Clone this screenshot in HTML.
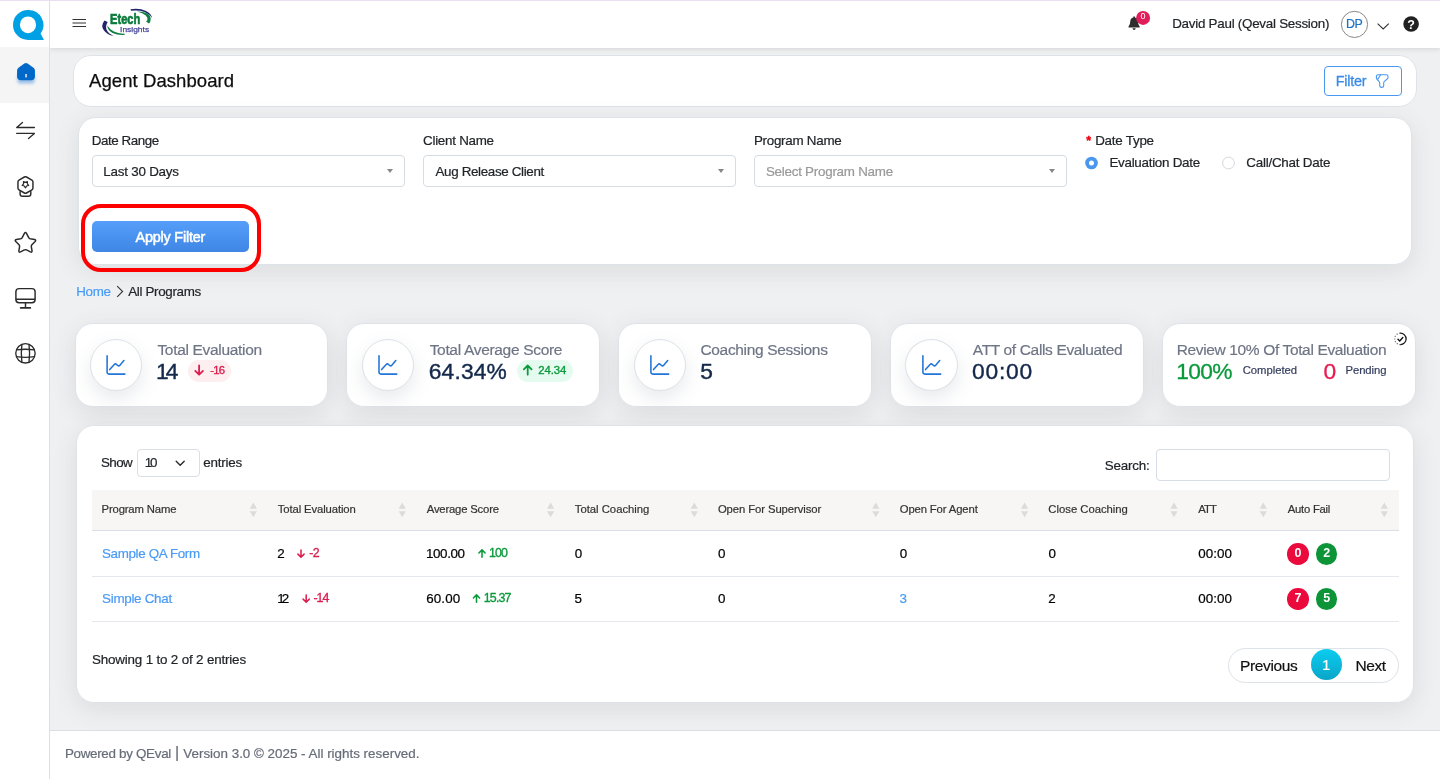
<!DOCTYPE html>
<html lang="en">
<head>
<meta charset="utf-8">
<title>Agent Dashboard</title>
<style>
*{box-sizing:border-box;margin:0;padding:0}
html,body{width:1440px;height:779px;overflow:hidden}
body{font-family:"Liberation Sans",sans-serif;background:#eff0f2;color:#212529;position:relative;font-size:13px}
#wrap{position:absolute;left:0;top:0;width:1440px;height:779px;will-change:transform}
.abs{position:absolute}
svg{position:absolute;overflow:visible}
.t{position:absolute;white-space:pre;line-height:1;z-index:20;-webkit-text-stroke:0.2px currentColor}
#topline{left:0;top:0;width:1440px;height:1px;background:#eadff0;z-index:60}
#side{left:0;top:0;width:50px;height:779px;background:#fff;border-right:1px solid #dcdfe3;z-index:6}
#side .active{left:0;top:47px;width:49px;height:56px;background:#f5f5f5}
#head{left:50px;top:0;width:1390px;height:48px;background:#fff;box-shadow:0 1px 5px rgba(40,50,60,.15);z-index:5}
.card{position:absolute;background:#fff;border-radius:18px;border:1px solid #dee3e8;box-shadow:0 6px 24px rgba(70,74,82,.115)}
#titlecard{left:73px;top:55px;width:1344px;height:52px;border:1px solid #dde3e8;box-shadow:none}
#filtercard{left:78px;top:117px;width:1334px;height:148px}
#tablecard{left:76px;top:425px;width:1338px;height:278px}
.stat{top:323px;width:254px;height:84px}
.ic{position:absolute;top:339px;width:52px;height:52px;border-radius:50%;background:#fff;border:1px solid #dde2e8;box-shadow:0 8px 18px rgba(120,130,150,.17);z-index:3}
.sel{position:absolute;top:155px;width:313px;height:32px;background:#fff;border:1px solid #d5dde3;border-radius:4px}
.sel i{position:absolute;right:11px;top:12.5px;width:0;height:0;border-left:3.2px solid transparent;border-right:3.2px solid transparent;border-top:4.6px solid #888}
.pill{position:absolute;border-radius:12px;height:22px;top:360px}
.hr{position:absolute;left:92px;width:1307px;height:1px;background:#e4e8ee}
.dot{position:absolute;width:21.4px;height:21.4px;border-radius:50%;color:#fff;font-size:12.5px;font-weight:700;text-align:center;line-height:21.4px;z-index:21}
#foot{left:50px;top:730px;width:1390px;height:49px;background:#fff;border-top:1px solid #dadfe4}
</style>
</head>
<body>
<div id="wrap">
<div class="abs" id="topline"></div>

<!-- sidebar -->
<div class="abs" id="side">
  <div class="abs active"></div>
  
<svg style="left:0;top:0" width="50" height="400" viewBox="0 0 50 400">
  <!-- Q logo -->
  <path fill="#00a1e4" fill-rule="evenodd" d="M28.1 9.9 A15.1 15 0 1 0 28.1 39.9 L44 39.9 L40.6 33.6 A15.1 15 0 0 0 28.1 9.9 Z M28 16.4 A8.1 8.4 0 1 1 28 33.2 A8.1 8.4 0 1 1 28 16.4 Z"/>
  <!-- home -->
  <defs><filter id="hs" x="-50%" y="-50%" width="200%" height="200%"><feGaussianBlur stdDeviation="1.6"/></filter></defs>
  <path d="M19.5 74 H32.5 Q34.5 74 34.5 76 V81.5 Q34.5 83.5 32.5 83.5 H19.5 Q17.5 83.5 17.5 81.5 V76 Q17.5 74 19.5 74Z" fill="#2f80d8" opacity=".45" filter="url(#hs)"/>
  <path fill="#0068c9" d="M24.3 63.5 Q25.95 62.3 27.6 63.5 L33.5 67.8 Q34.95 68.9 34.95 70.6 V76.2 Q34.95 80.3 30.8 80.3 H21.2 Q17.05 80.3 17.05 76.2 V70.6 Q17.05 68.9 18.5 67.8 Z"/>
  <rect x="25.1" y="74" width="1.9" height="3.4" fill="#b4d0f0"/>
  <!-- swap -->
  <g fill="none" stroke="#2b2b2b" stroke-width="1.3" stroke-linecap="round" stroke-linejoin="round">
    <path d="M34.4 127.5 H16.7 L22.5 122.4"/>
    <path d="M16.7 133.4 H34.4 L28.5 138.5"/>
  </g>
  <!-- award -->
  <g fill="none" stroke="#2b2b2b" stroke-width="1.45" stroke-linejoin="round" stroke-linecap="round">
    <path d="M24.4 177 Q25.45 176.4 26.5 177 L31.9 180.1 Q32.95 180.7 32.95 181.9 V188.1 Q32.95 189.3 31.9 189.9 L26.5 193 Q25.45 193.6 24.4 193 L19 189.9 Q17.95 189.3 17.95 188.1 V181.9 Q17.95 180.7 19 180.1 Z"/>
    <path d="M25.45 187.8 L24.27 186.02 L22.22 185.45 L23.55 183.78 L23.45 181.65 L25.45 182.4 L27.45 181.65 L27.35 183.78 L28.68 185.45 L26.63 186.02 Z" stroke-width="1.2"/>
    <path d="M20.1 191.4 V194 Q20.1 196.3 22.4 196.3 H28.5 Q30.8 196.3 30.8 194 V191.4"/>
  </g>
  <!-- star -->
  <path fill="none" stroke="#2b2b2b" stroke-width="1.5" stroke-linejoin="round" d="M24.4 233.4 Q25.45 231.7 26.5 233.4 L28.7 237.7 Q29.2 238.6 30.2 238.8 L34.6 239.5 Q36.4 240.1 35.1 241.5 L31.9 244.7 Q31.2 245.5 31.3 246.5 L32 250.7 Q32.2 252.7 30.4 251.9 L26.5 249.9 Q25.45 249.4 24.4 249.9 L20.5 251.9 Q18.7 252.7 18.9 250.7 L19.6 246.5 Q19.7 245.5 19 244.7 L15.8 241.5 Q14.5 240.1 16.3 239.5 L20.7 238.8 Q21.7 238.6 22.2 237.7 Z"/>
  <!-- monitor -->
  <g fill="none" stroke="#2b2b2b" stroke-width="1.45">
    <rect x="15.9" y="288.6" width="19.2" height="14.2" rx="3.2"/>
    <path d="M15.9 299.2 H35.1 M25.5 302.8 V307.5"/>
    <path d="M20.6 307.9 H30.4" stroke-width="1.6" stroke-linecap="round"/>
  </g>
  <!-- globe -->
  <g fill="none" stroke="#2b2b2b" stroke-width="1.35">
    <circle cx="25.45" cy="353.3" r="9.7"/>
    <path d="M21.9 344.3 Q20.7 353.3 21.9 362.3 M29 344.3 Q30.2 353.3 29 362.3"/>
    <path d="M16.4 349.9 Q25.45 348.5 34.5 349.9 M16.4 356.7 Q25.45 358.1 34.5 356.7"/>
  </g>
</svg>

</div>

<!-- header -->
<div class="abs" id="head">
  
<svg style="left:-50px;top:0" width="1440" height="48" viewBox="0 0 1440 48">
  <!-- hamburger -->
  <path d="M72.5 19.5 H86 M72.5 23 H86 M72.5 26.5 H86" stroke="#333" stroke-width="1.1" fill="none"/>
  <!-- logo -->
  <g>
    <path d="M104.5 20.4 Q100.5 25.5 103.8 30.3 Q107.2 34.9 113.6 35.9 Q108.2 33.6 106.6 29.8 Q105.2 26.1 107.7 22 Z" fill="#23236e"/>
    <path d="M107.3 25.5 Q107.6 30.5 112.6 33 Q117.6 35.4 124.6 34.9 L124.5 33.6 Q118.5 33.9 113.9 31.6 Q109.5 29.3 107.3 25.5 Z" fill="#0f7f42"/>
    <path d="M130.5 9.2 Q139.5 7.8 146 10.9 Q151.7 13.7 152 18 Q149.5 14 144.5 12 Q138.5 9.9 131 10.8 Z" fill="#23236e"/>
    <path d="M137 11.4 Q144.5 11.3 148.8 14.6 Q151.8 17.5 150 22.4 L148.8 23.5 L146 21.3 L147.3 20.5 Q148 17.5 145.8 15.5 Q142.8 12.9 137 11.4 Z" fill="#0f7f42"/>
    <text x="110.1" y="24.4" font-family="'Liberation Sans',sans-serif" font-weight="700" font-size="14" fill="#0b7a3b" stroke="#0b7a3b" stroke-width="0.65" stroke-linejoin="round" textLength="30.2" lengthAdjust="spacingAndGlyphs">Etech</text>
    <text x="120.1" y="31.8" font-family="'Liberation Sans',sans-serif" font-size="7.8" fill="#45459a" stroke="#45459a" stroke-width="0.25" textLength="29" lengthAdjust="spacingAndGlyphs">Insights</text>
  </g>
  <!-- bell -->
  <path fill="#2d2d2d" d="M1134.1 16.2 Q1134.9 16.2 1134.9 17 V17.5 Q1138 18.3 1138 21.8 Q1138 25 1139.5 26.2 Q1140 26.7 1139.6 27.4 H1128.6 Q1128.2 26.7 1128.7 26.2 Q1130.2 25 1130.2 21.8 Q1130.2 18.3 1133.3 17.5 V17 Q1133.3 16.2 1134.1 16.2 Z M1132.5 28.3 H1135.7 Q1135.6 29.9 1134.1 29.9 Q1132.6 29.9 1132.5 28.3 Z"/>
  <circle cx="1143.1" cy="17.9" r="7" fill="#e01e5a"/>
  <text x="1142.9" y="18.8" text-anchor="middle" font-family="'Liberation Sans',sans-serif" font-size="9" fill="#fff">0</text>
  <!-- avatar -->
  <circle cx="1354.5" cy="24.4" r="13.1" fill="#fff" stroke="#7a7a7a" stroke-width="0.9"/>
  <!-- chevron -->
  <path d="M1377.6 23.7 L1383.2 28.9 L1388.8 23.7" fill="none" stroke="#333" stroke-width="1.1"/>
  <!-- help -->
  <circle cx="1411.1" cy="24" r="7.8" fill="#212121"/>
  <text x="1411.1" y="28.5" text-anchor="middle" font-family="'Liberation Sans',sans-serif" font-size="12.5" font-weight="700" fill="#fff">?</text>
</svg>

</div>

<!-- title card -->
<div class="card" id="titlecard"></div>
<div class="abs" style="left:1324px;top:66px;width:78px;height:30px;border:1px solid #4a97f0;border-radius:4px;background:#fff"></div>

<svg style="left:0;top:0;z-index:21" width="1440" height="110" viewBox="0 0 1440 110">
  <g fill="none" stroke="#4a97f0" stroke-width="1.1" stroke-linejoin="round" stroke-linecap="round">
    <path d="M1378 74.7 H1386.4 Q1388 74.7 1388 76.3 V77.3 Q1388 78.3 1387.2 79 L1384.4 81.3 Q1383.7 81.9 1383.7 82.9 V85.7 Q1383.7 87.4 1381.7 87.4 Q1379.7 87.4 1379.7 85.7 V82.9 Q1379.7 81.9 1379 81.3 L1377.2 79.5 Q1376.4 78.7 1376.4 77.6 V76.3 Q1376.4 74.7 1378 74.7 Z"/>
    <path d="M1380.6 74.8 L1377.7 79.4"/>
  </g>
</svg>


<!-- filter card -->
<div class="card" id="filtercard"></div>
<div class="sel" style="left:92px"><i></i></div>
<div class="sel" style="left:423px"><i></i></div>
<div class="sel" style="left:754px"><i></i></div>
<svg style="left:0;top:0" width="1440" height="200" viewBox="0 0 1440 200"><circle cx="1091.5" cy="163" r="6.3" fill="#4a97f0"/><circle cx="1091.5" cy="163" r="2.5" fill="#fff"/><circle cx="1228.5" cy="163" r="5.9" fill="#fff" stroke="#d3d9e0" stroke-width="1"/></svg>
<div class="abs" style="left:92px;top:221px;width:157px;height:31px;border-radius:5px;background:linear-gradient(180deg,#559ef9 0%,#3f86e5 100%)"></div>
<div class="abs" style="left:81px;top:204px;width:180px;height:68px;border:4px solid #fe0000;border-radius:20px;z-index:25"></div>

<!-- breadcrumb chevron -->
<svg style="left:116px;top:285px" width="8" height="13" viewBox="0 0 8 13"><path d="M1.2 1.2 L6.6 6.5 L1.2 11.8" fill="none" stroke="#333" stroke-width="1.1"/></svg>

<!-- stat cards -->
<div class="card stat" style="left:75px;width:253px"></div>
<div class="card stat" style="left:346px"></div>
<div class="card stat" style="left:618px"></div>
<div class="card stat" style="left:890px"></div>
<div class="card stat" style="left:1162px"></div>
<div class="ic" style="left:90px"></div>
<div class="ic" style="left:361.8px"></div>
<div class="ic" style="left:633.7px"></div>
<div class="ic" style="left:905px;width:53px"></div>
<svg style="left:0;top:0;z-index:4" width="1440" height="420" viewBox="0 0 1440 420"><g fill="none" stroke="#2274d8" stroke-width="1.55" stroke-linecap="round" stroke-linejoin="round"><g transform="translate(116 364.7)"><path d="M-8.9 -9 V7.4 Q-8.9 9.4 -6.9 9.4 H8.9"/><path d="M-6.3 4.9 L-1.7 -0.2 Q-0.7 -1.3 0.4 -0.4 L1.8 0.8 Q2.8 1.7 3.7 0.7 L7.9 -4.2"/></g><g transform="translate(387.9 364.7)"><path d="M-8.9 -9 V7.4 Q-8.9 9.4 -6.9 9.4 H8.9"/><path d="M-6.3 4.9 L-1.7 -0.2 Q-0.7 -1.3 0.4 -0.4 L1.8 0.8 Q2.8 1.7 3.7 0.7 L7.9 -4.2"/></g><g transform="translate(659.8 364.7)"><path d="M-8.9 -9 V7.4 Q-8.9 9.4 -6.9 9.4 H8.9"/><path d="M-6.3 4.9 L-1.7 -0.2 Q-0.7 -1.3 0.4 -0.4 L1.8 0.8 Q2.8 1.7 3.7 0.7 L7.9 -4.2"/></g><g transform="translate(931.8 364.7)"><path d="M-8.9 -9 V7.4 Q-8.9 9.4 -6.9 9.4 H8.9"/><path d="M-6.3 4.9 L-1.7 -0.2 Q-0.7 -1.3 0.4 -0.4 L1.8 0.8 Q2.8 1.7 3.7 0.7 L7.9 -4.2"/></g></g><g fill="none" stroke-width="1.25">
 <path d="M1400.4 333.2 A5.7 5.7 0 0 1 1400.4 344.6" stroke="#111" stroke-linecap="round"/>
 <path d="M1400.4 344.6 A5.7 5.7 0 0 1 1400.4 333.2" stroke="#777" stroke-dasharray="1.1 1.6"/>
 <path d="M1398 339.3 L1399.7 340.9 L1402.8 337.6" stroke="#111" stroke-width="1.4" stroke-linecap="round" stroke-linejoin="round"/>
</g></svg>
<div class="pill" style="left:188px;width:43px;background:#fdeef0"></div>
<div class="pill" style="left:517px;width:56px;background:#e6fbef"></div>

<!-- table card -->
<div class="card" id="tablecard"></div>
<div class="abs" style="left:137px;top:449px;width:63px;height:28px;border:1px solid #d9dfe6;border-radius:4px;background:#fff"></div>
<svg style="left:0;top:0" width="200" height="480" viewBox="0 0 200 480"><path d="M176.2 461.3 L180.2 465.3 L184.2 461.3" fill="none" stroke="#2b2b2b" stroke-width="1.4" stroke-linecap="round" stroke-linejoin="round"/></svg>
<div class="abs" style="left:1156px;top:449px;width:234px;height:32px;border:1px solid #d6dde4;border-radius:4px;background:#fff"></div>
<div class="abs" style="left:92px;top:490px;width:1307px;height:40px;background:#f7f6f5"></div>
<div class="hr" style="top:530px;background:#d9dfe7"></div>
<div class="hr" style="top:576px"></div>
<div class="hr" style="top:621px"></div>
<svg style="left:0;top:0" width="1440" height="540" viewBox="0 0 1440 540"><g fill="#dbdbdb"><path d="M249.75 508.7 H256.95 L253.35 502.5 Z M249.75 511.2 H256.95 L253.35 517.2 Z"/><path d="M398.65 508.7 H405.85 L402.25 502.5 Z M398.65 511.2 H405.85 L402.25 517.2 Z"/><path d="M547 508.7 H554.2 L550.6 502.5 Z M547 511.2 H554.2 L550.6 517.2 Z"/><path d="M690.7 508.7 H697.9 L694.3 502.5 Z M690.7 511.2 H697.9 L694.3 517.2 Z"/><path d="M872.2 508.7 H879.4 L875.8 502.5 Z M872.2 511.2 H879.4 L875.8 517.2 Z"/><path d="M1021 508.7 H1028.2 L1024.6 502.5 Z M1021 511.2 H1028.2 L1024.6 517.2 Z"/><path d="M1170.4 508.7 H1177.6 L1174 502.5 Z M1170.4 511.2 H1177.6 L1174 517.2 Z"/><path d="M1259.7 508.7 H1266.9 L1263.3 502.5 Z M1259.7 511.2 H1266.9 L1263.3 517.2 Z"/><path d="M1380.7 508.7 H1387.9 L1384.3 502.5 Z M1380.7 511.2 H1387.9 L1384.3 517.2 Z"/></g></svg>
<div class="dot" style="left:1287.4px;top:543.2px;background:#ea0a3c">0</div>
<div class="dot" style="left:1316px;top:543.2px;background:#0d9437">2</div>
<div class="dot" style="left:1287.4px;top:588.2px;background:#ea0a3c">7</div>
<div class="dot" style="left:1316px;top:588.2px;background:#0d9437">5</div>
<svg style="left:0;top:0;z-index:21" width="1440" height="700" viewBox="0 0 1440 700"><g fill="none" stroke-linecap="round" stroke-linejoin="round"><path d="M199.1 365.5 V374.4 M195.24 370.84 L199.1 374.7 L202.96 370.84" stroke="#dc1f4e" stroke-width="1.8"/><path d="M527.7 374.7 V365.8 M523.84 369.36 L527.7 365.5 L531.56 369.36" stroke="#0a9a3c" stroke-width="1.8"/><path d="M301 549.9 V556.9 M297.93 554.13 L301 557.2 L304.07 554.13" stroke="#dc1f4e" stroke-width="1.55"/><path d="M306.2 594.9 V601.9 M303.13 599.13 L306.2 602.2 L309.27 599.13" stroke="#dc1f4e" stroke-width="1.55"/><path d="M482 557.2 V550.2 M478.93 552.97 L482 549.9 L485.07 552.97" stroke="#0a9a3c" stroke-width="1.55"/><path d="M476.5 602.2 V595.2 M473.43 597.97 L476.5 594.9 L479.57 597.97" stroke="#0a9a3c" stroke-width="1.55"/></g></svg>
<div class="abs" style="left:1228px;top:648px;width:171px;height:35px;border:1px solid #dde3e8;border-radius:18px;background:#fff"></div>
<div class="abs" style="left:1311px;top:649px;width:31px;height:31px;border-radius:50%;background:linear-gradient(180deg,#0acdf0 0%,#0aa5c8 100%)"></div>

<!-- footer -->
<div class="abs" id="foot"></div>

<div class="t" style="left:1172.19px;top:17px;font-size:13.4px;color:#212529;letter-spacing:-0.26px;">David Paul (Qeval Session)</div>
<div class="t" style="left:1346.08px;top:18px;font-size:12.4px;color:#1a73c8;letter-spacing:-0.52px;">DP</div>
<div class="t" style="left:89.05px;top:72px;font-size:18.5px;color:#0d0d0d;letter-spacing:0.07px;-webkit-text-stroke:0.25px #0d0d0d;">Agent Dashboard</div>
<div class="t" style="left:1335.79px;top:74px;font-size:14.4px;color:#3b8ae6;letter-spacing:-0.23px;-webkit-text-stroke:0.3px #3b8ae6;">Filter</div>
<div class="t" style="left:91.69px;top:134px;font-size:13.4px;color:#212529;letter-spacing:-0.44px;">Date Range</div>
<div class="t" style="left:103.19px;top:165px;font-size:13.4px;color:#212529;letter-spacing:-0.21px;">Last 30 Days</div>
<div class="t" style="left:423.07px;top:134px;font-size:13.4px;color:#212529;letter-spacing:-0.27px;">Client Name</div>
<div class="t" style="left:435.54px;top:165px;font-size:13.4px;color:#212529;letter-spacing:-0.35px;">Aug Release Client</div>
<div class="t" style="left:753.89px;top:134px;font-size:13.4px;color:#212529;letter-spacing:-0.26px;">Program Name</div>
<div class="t" style="left:765.94px;top:165px;font-size:13.4px;color:#999;letter-spacing:-0.25px;">Select Program Name</div>
<div class="t" style="left:1086.16px;top:135px;font-size:12.4px;color:#f2000c;font-weight:700;-webkit-text-stroke:0.4px #f2000c;">*</div>
<div class="t" style="left:1095.19px;top:134px;font-size:13.4px;color:#212529;letter-spacing:-0.24px;">Date Type</div>
<div class="t" style="left:1109.39px;top:156px;font-size:13.4px;color:#212529;letter-spacing:-0.27px;">Evaluation Date</div>
<div class="t" style="left:1246.27px;top:156px;font-size:13.4px;color:#212529;letter-spacing:-0.23px;">Call/Chat Date</div>
<div class="t" style="left:135.55px;top:230px;font-size:14.4px;color:#fff;letter-spacing:-0.2px;-webkit-text-stroke:0.5px #fff;">Apply Filter</div>
<div class="t" style="left:76.19px;top:285px;font-size:13.4px;color:#4a9bf5;letter-spacing:-0.33px;">Home</div>
<div class="t" style="left:128.24px;top:285px;font-size:13.4px;color:#212529;letter-spacing:-0.34px;">All Programs</div>
<div class="t" style="left:157.44px;top:342px;font-size:15.5px;color:#6e7585;letter-spacing:-0.32px;">Total Evaluation</div>
<div class="t" style="left:156.06px;top:360px;font-size:22.8px;color:#14284b;letter-spacing:-3.04px;-webkit-text-stroke:0.4px #14284b;">14</div>
<div class="t" style="left:210.22px;top:365px;font-size:11.3px;color:#dc1f4e;letter-spacing:-0.78px;-webkit-text-stroke:0.35px currentColor;">-16</div>
<div class="t" style="left:429.64px;top:342px;font-size:15.5px;color:#6e7585;letter-spacing:-0.31px;">Total Average Score</div>
<div class="t" style="left:428.78px;top:360px;font-size:22.8px;color:#14284b;letter-spacing:0.16px;-webkit-text-stroke:0.4px #14284b;">64.34%</div>
<div class="t" style="left:538.21px;top:365px;font-size:11.3px;color:#0a9a3c;letter-spacing:-0.02px;-webkit-text-stroke:0.35px currentColor;">24.34</div>
<div class="t" style="left:700.47px;top:342px;font-size:15.5px;color:#6e7585;letter-spacing:-0.33px;">Coaching Sessions</div>
<div class="t" style="left:700.17px;top:360px;font-size:22.8px;color:#14284b;-webkit-text-stroke:0.4px #14284b;">5</div>
<div class="t" style="left:972.83px;top:342px;font-size:15.5px;color:#6e7585;letter-spacing:-0.35px;">ATT of Calls Evaluated</div>
<div class="t" style="left:972.1px;top:360px;font-size:22.8px;color:#14284b;letter-spacing:0.73px;-webkit-text-stroke:0.4px #14284b;">00:00</div>
<div class="t" style="left:1176.72px;top:342px;font-size:15.5px;color:#6e7585;letter-spacing:-0.36px;">Review 10% Of Total Evaluation</div>
<div class="t" style="left:1176.26px;top:360px;font-size:22.8px;color:#0a9a3c;letter-spacing:-0.71px;-webkit-text-stroke:0.3px #0a9a3c;">100%</div>
<div class="t" style="left:1242.67px;top:365px;font-size:11.3px;color:#333d5c;letter-spacing:-0.03px;">Completed</div>
<div class="t" style="left:1323.49px;top:360px;font-size:22.8px;color:#e8194f;-webkit-text-stroke:0.3px #e8194f;">0</div>
<div class="t" style="left:1345.5px;top:365px;font-size:11.3px;color:#333d5c;letter-spacing:-0.08px;">Pending</div>
<div class="t" style="left:100.94px;top:456px;font-size:13.4px;color:#212529;letter-spacing:-0.58px;">Show</div>
<div class="t" style="left:144.78px;top:456px;font-size:13.4px;color:#212529;letter-spacing:-2.16px;">10</div>
<div class="t" style="left:203.19px;top:456px;font-size:13.4px;color:#212529;letter-spacing:-0.2px;">entries</div>
<div class="t" style="left:1104.74px;top:459px;font-size:13.4px;color:#212529;letter-spacing:-0.21px;">Search:</div>
<div class="t" style="left:101.5px;top:504px;font-size:11.3px;color:#333;letter-spacing:-0.15px;">Program Name</div>
<div class="t" style="left:277.85px;top:504px;font-size:11.3px;color:#333;letter-spacing:-0.12px;">Total Evaluation</div>
<div class="t" style="left:426.76px;top:504px;font-size:11.3px;color:#333;letter-spacing:-0.19px;">Average Score</div>
<div class="t" style="left:574.85px;top:504px;font-size:11.3px;color:#333;letter-spacing:-0.02px;">Total Coaching</div>
<div class="t" style="left:717.92px;top:504px;font-size:11.3px;color:#333;letter-spacing:-0.09px;">Open For Supervisor</div>
<div class="t" style="left:899.72px;top:504px;font-size:11.3px;color:#333;letter-spacing:-0.13px;">Open For Agent</div>
<div class="t" style="left:1048.37px;top:504px;font-size:11.3px;color:#333;letter-spacing:-0.02px;">Close Coaching</div>
<div class="t" style="left:1198.26px;top:504px;font-size:11.3px;color:#333;letter-spacing:-0.94px;">ATT</div>
<div class="t" style="left:1287.76px;top:504px;font-size:11.3px;color:#333;letter-spacing:-0.25px;">Auto Fail</div>
<div class="t" style="left:102.04px;top:547px;font-size:13.4px;color:#4a9bf5;letter-spacing:-0.36px;">Sample QA Form</div>
<div class="t" style="left:277.37px;top:547px;font-size:13.4px;color:#000;">2</div>
<div class="t" style="left:309.21px;top:547px;font-size:12.4px;color:#dc1f4e;letter-spacing:-0.56px;-webkit-text-stroke:0.35px currentColor;">-2</div>
<div class="t" style="left:425.98px;top:547px;font-size:13.4px;color:#000;letter-spacing:-0.38px;">100.00</div>
<div class="t" style="left:489px;top:547px;font-size:12.4px;color:#0a9a3c;letter-spacing:-0.87px;-webkit-text-stroke:0.35px currentColor;">100</div>
<div class="t" style="left:574.69px;top:547px;font-size:13.4px;color:#000;">0</div>
<div class="t" style="left:717.89px;top:547px;font-size:13.4px;color:#000;">0</div>
<div class="t" style="left:899.69px;top:547px;font-size:13.4px;color:#000;">0</div>
<div class="t" style="left:1048.39px;top:547px;font-size:13.4px;color:#000;">0</div>
<div class="t" style="left:1198.25px;top:547px;font-size:13.4px;color:#000;letter-spacing:0.06px;">00:00</div>
<div class="t" style="left:102.04px;top:592px;font-size:13.4px;color:#4a9bf5;letter-spacing:-0.28px;">Simple Chat</div>
<div class="t" style="left:277.28px;top:592px;font-size:13.4px;color:#000;letter-spacing:-2.96px;">12</div>
<div class="t" style="left:313.41px;top:592px;font-size:12.4px;color:#dc1f4e;letter-spacing:-0.92px;-webkit-text-stroke:0.35px currentColor;">-14</div>
<div class="t" style="left:426.27px;top:592px;font-size:13.4px;color:#000;letter-spacing:0.09px;">60.00</div>
<div class="t" style="left:483.8px;top:592px;font-size:12.4px;color:#0a9a3c;letter-spacing:-0.83px;-webkit-text-stroke:0.35px currentColor;">15.37</div>
<div class="t" style="left:574.6px;top:592px;font-size:13.4px;color:#000;">5</div>
<div class="t" style="left:717.89px;top:592px;font-size:13.4px;color:#000;">0</div>
<div class="t" style="left:899.62px;top:592px;font-size:13.4px;color:#4a9bf5;">3</div>
<div class="t" style="left:1048.37px;top:592px;font-size:13.4px;color:#000;">2</div>
<div class="t" style="left:1198.25px;top:592px;font-size:13.4px;color:#000;letter-spacing:0.06px;">00:00</div>
<div class="t" style="left:91.94px;top:653px;font-size:13.4px;color:#212529;letter-spacing:-0.17px;">Showing 1 to 2 of 2 entries</div>
<div class="t" style="left:1240.12px;top:658px;font-size:15.5px;color:#111;letter-spacing:-0.39px;">Previous</div>
<div class="t" style="left:1322.3px;top:658px;font-size:14.4px;color:#fff;">1</div>
<div class="t" style="left:1355.52px;top:658px;font-size:15.5px;color:#111;letter-spacing:-0.41px;">Next</div>
<div class="t" style="left:64.89px;top:747px;font-size:13.4px;color:#666c78;letter-spacing:-0.3px;">Powered by QEval</div>
<div class="t" style="left:175.07px;top:745px;font-size:16px;color:#666c78;">|</div>
<div class="t" style="left:183.31px;top:747px;font-size:13.4px;color:#666c78;">Version 3.0 © 2025 - All rights reserved.</div>
</div>
</body>
</html>
